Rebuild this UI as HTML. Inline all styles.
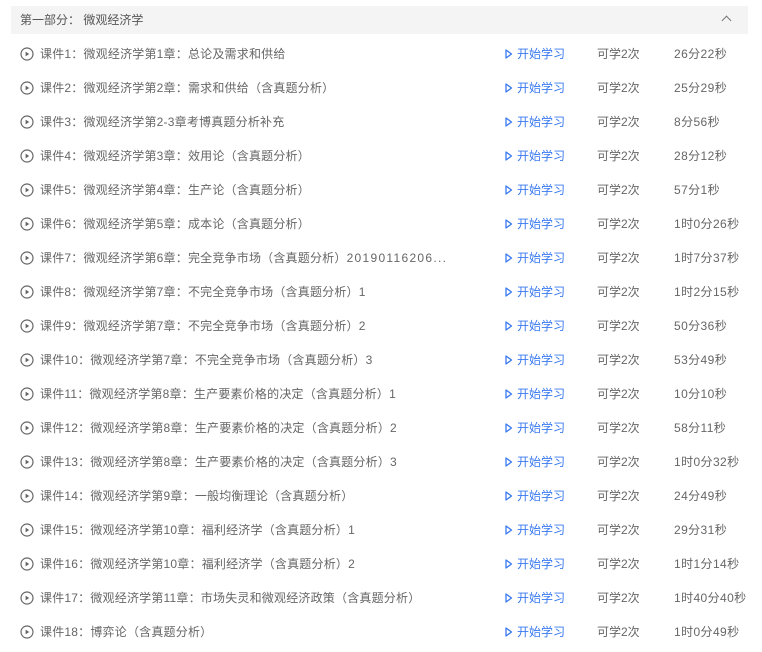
<!DOCTYPE html><html><head><meta charset="utf-8"><style>
body{margin:0;width:762px;height:652px;background:#fff;font-family:"Liberation Sans","Noto Sans CJK SC",sans-serif;font-size:12px;color:#666;position:relative;overflow:hidden}
.h{position:absolute;left:11px;top:6px;width:737px;height:28px;background:#f4f4f4;line-height:28px;color:#555}
.h span{position:absolute;left:9px}
.h i{position:absolute;left:712px;top:11px;width:6px;height:6px;border-left:1.3px solid #777;border-top:1.3px solid #777;transform:rotate(45deg)}
.r{position:absolute;left:0;height:20px;line-height:20px;width:762px;white-space:nowrap}
.r svg.p{position:absolute;left:20px;top:3px}
.t{position:absolute;left:40px;letter-spacing:0.2px}
.t em{font-style:normal;letter-spacing:1.3px}
.s{position:absolute;left:517px;color:#3a7af0}
.s svg{position:absolute;left:-12px;top:5px}
.c{position:absolute;left:597px}
.d{position:absolute;left:674px;letter-spacing:0.4px}
</style></head><body>
<div class="h"><span>第一部分： 微观经济学</span><i></i></div>
<script>
var T=["课件1：微观经济学第1章：总论及需求和供给","课件2：微观经济学第2章：需求和供给（含真题分析）","课件3：微观经济学第2-3章考博真题分析补充","课件4：微观经济学第3章：效用论（含真题分析）","课件5：微观经济学第4章：生产论（含真题分析）","课件6：微观经济学第5章：成本论（含真题分析）","课件7：微观经济学第6章：完全竞争市场（含真题分析）<em>20190116206...</em>","课件8：微观经济学第7章：不完全竞争市场（含真题分析）1","课件9：微观经济学第7章：不完全竞争市场（含真题分析）2","课件10：微观经济学第7章：不完全竞争市场（含真题分析）3","课件11：微观经济学第8章：生产要素价格的决定（含真题分析）1","课件12：微观经济学第8章：生产要素价格的决定（含真题分析）2","课件13：微观经济学第8章：生产要素价格的决定（含真题分析）3","课件14：微观经济学第9章：一般均衡理论（含真题分析）","课件15：微观经济学第10章：福利经济学（含真题分析）1","课件16：微观经济学第10章：福利经济学（含真题分析）2","课件17：微观经济学第11章：市场失灵和微观经济政策（含真题分析）","课件18：博弈论（含真题分析）"];
var D=["26分22秒","25分29秒","8分56秒","28分12秒","57分1秒","1时0分26秒","1时7分37秒","1时2分15秒","50分36秒","53分49秒","10分10秒","58分11秒","1时0分32秒","24分49秒","29分31秒","1时1分14秒","1时40分40秒","1时0分49秒"];
var h="";for(var i=0;i<18;i++){h+='<div class="r" style="top:'+(44+i*34)+'px"><svg class="p" width="14" height="14" viewBox="0 0 14 14"><circle cx="7" cy="7" r="6" fill="none" stroke="#666" stroke-width="1.2"/><path d="M5.6 4.6L9.2 7L5.6 9.4Z" fill="#666"/></svg><span class="t">'+T[i]+'</span><span class="s"><svg width="8" height="10" viewBox="0 0 8 10"><path d="M1 1L6.5 5L1 9Z" fill="none" stroke="#3a7af0" stroke-width="1.3" stroke-linejoin="round"/></svg>开始学习</span><span class="c">可学2次</span><span class="d">'+D[i]+'</span></div>';}
document.write(h);
</script>
</body></html>
